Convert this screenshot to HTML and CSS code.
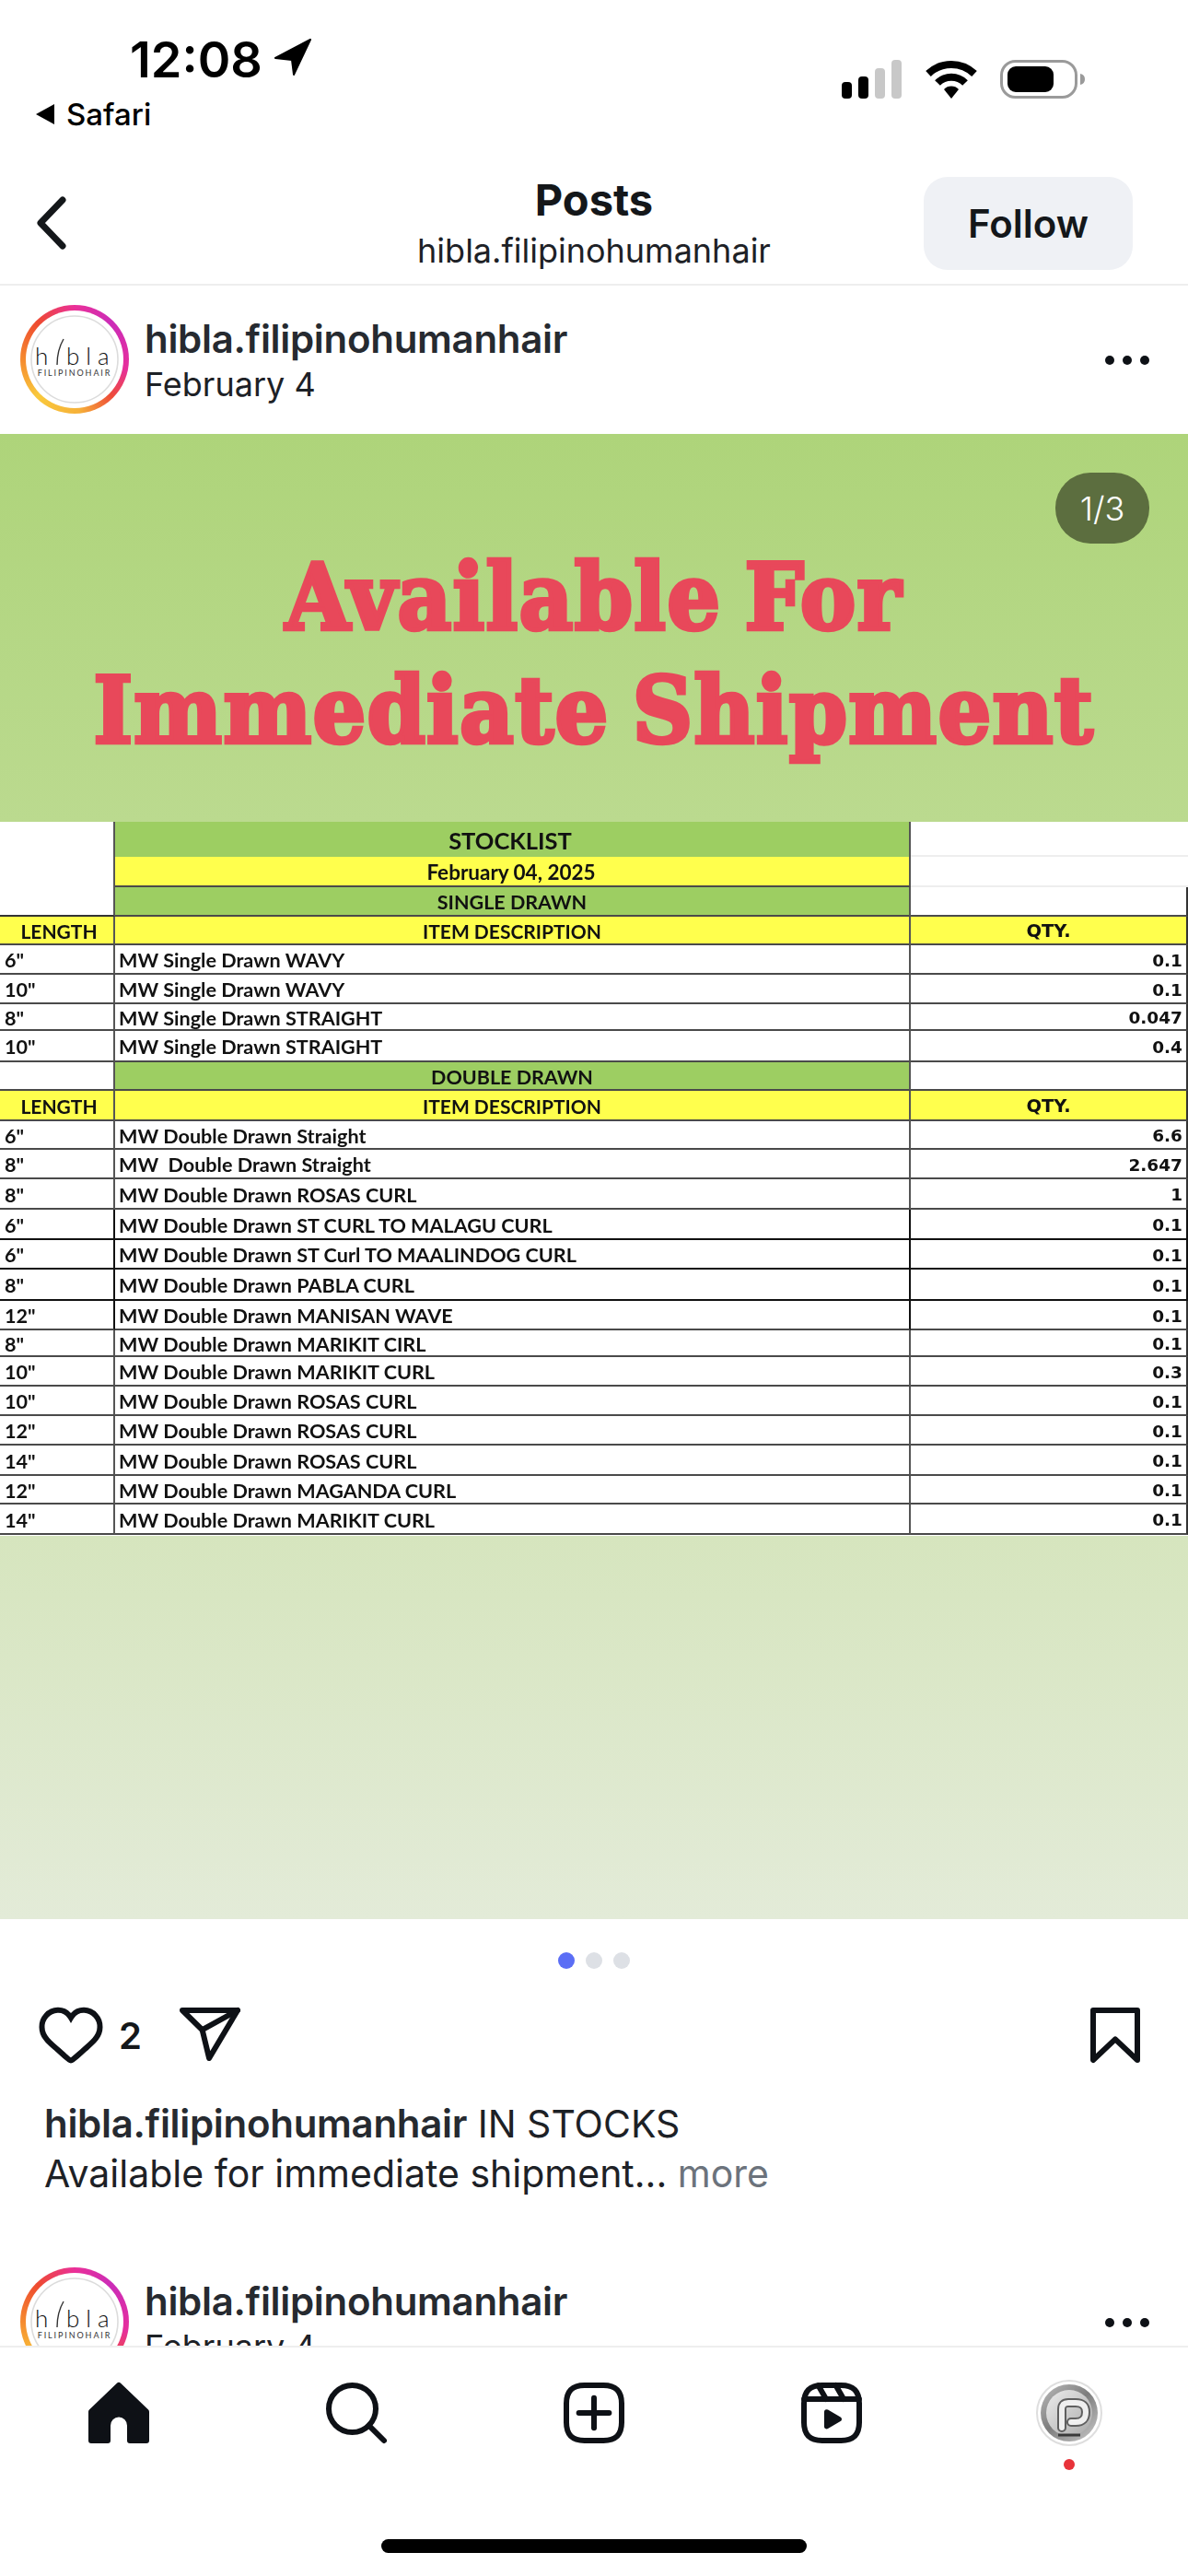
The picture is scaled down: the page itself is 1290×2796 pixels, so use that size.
FILE: index.html
```html
<!DOCTYPE html>
<html lang="en">
<head>
<meta charset="utf-8">
<title>Posts</title>
<link rel="stylesheet" href="styles.css">
</head>
<body>
<div class="app">
  <div class="status">
    <div class="status-left">
      <div class="clock-row">
        <span class="clock">12:08</span>
        <svg class="loc" viewBox="0 0 42 40"><path d="M40 1 L2 21 L20 23 L22 39 Z"/></svg>
      </div>
      <div class="safari-row">
        <svg class="safari-back" viewBox="0 0 22 22"><path d="M21 0 V22 L1 11 Z"/></svg>
        <span class="safari">Safari</span>
      </div>
    </div>
    <div class="status-right">
      <svg class="signal" viewBox="0 0 66 42">
        <rect x="0" y="24" width="11" height="18" rx="4"/>
        <rect x="18" y="18" width="11" height="24" rx="4"/>
        <rect class="off" x="36" y="9" width="11" height="33" rx="4"/>
        <rect class="off" x="54" y="0" width="11" height="42" rx="4"/>
      </svg>
      <svg class="wifi" viewBox="0 0 58 42">
        <path class="arc" d="M4 15 A36 36 0 0 1 54 15"/>
        <path class="arc" d="M14 25 A21 21 0 0 1 44 25"/>
        <path d="M21 32 L29 42 L37 32 A11 11 0 0 0 21 32 Z"/>
      </svg>
      <svg class="battery" viewBox="0 0 92 42">
        <rect class="shell" x="1.5" y="1.5" width="81" height="39" rx="15"/>
        <rect x="8" y="7" width="50" height="28" rx="9"/>
        <path class="cap" d="M87 15 Q92 16 92 21 Q92 26 87 27 Z"/>
      </svg>
    </div>
  </div>

  <header class="topbar">
    <div class="topbar-left">
      <svg class="chevron" viewBox="0 0 34 58"><path d="M29 4 L5 29 L29 54"/></svg>
    </div>
    <div class="topbar-title">
      <div class="title">Posts</div>
      <div class="subtitle">hibla.filipinohumanhair</div>
    </div>
    <div class="topbar-right"><span class="follow">Follow</span></div>
  </header>

  <main class="feed">
    <article class="post">
      <div class="post-head">
        <div class="ring"><div class="ring-gap">
          <svg class="logo" viewBox="0 0 96 96">
            <circle class="logo-edge" cx="48" cy="48" r="47"/>
            <text class="logo-word" x="5" y="54">h</text>
            <path class="logo-i" d="M36 26 Q29 38 29 54"/>
            <text class="logo-word" x="39" y="54">bla</text>
            <text class="logo-sub" x="48" y="66" text-anchor="middle">FILIPINOHAIR</text>
          </svg>
        </div></div>
        <div class="who">
          <div class="name">hibla.filipinohumanhair</div>
          <div class="date">February 4</div>
        </div>
        <div class="more-dots"><i></i><i></i><i></i></div>
      </div>

      <section class="slide">
        <span class="counter">1/3</span>
        <h1 class="headline">Available For<br>Immediate Shipment</h1>
        <div class="stock">
          <div class="cell blank span3"></div>
          <div class="cell green big">STOCKLIST</div>
          <div class="cell faint"></div>
          <div class="cell yellow mid">February 04, 2025</div>
          <div class="cell faint"></div>
          <div class="cell green sec">SINGLE DRAWN</div>
          <div class="cell qty"></div>

          <div class="cell yellow hdr lenhdr">LENGTH</div><div class="cell yellow hdr">ITEM DESCRIPTION</div><div class="cell yellow qtyhdr">QTY.</div>
          <div class="cell len">6"</div><div class="cell desc">MW Single Drawn WAVY</div><div class="cell qty">0.1</div>
          <div class="cell len">10"</div><div class="cell desc">MW Single Drawn WAVY</div><div class="cell qty">0.1</div>
          <div class="cell len">8"</div><div class="cell desc">MW Single Drawn STRAIGHT</div><div class="cell qty">0.047</div>
          <div class="cell len">10"</div><div class="cell desc">MW Single Drawn STRAIGHT</div><div class="cell qty">0.4</div>

          <div class="cell len"></div><div class="cell green sec">DOUBLE DRAWN</div><div class="cell qty"></div>
          <div class="cell yellow hdr lenhdr">LENGTH</div><div class="cell yellow hdr">ITEM DESCRIPTION</div><div class="cell yellow qtyhdr">QTY.</div>

          <div class="cell len">6"</div><div class="cell desc">MW Double Drawn Straight</div><div class="cell qty">6.6</div>
          <div class="cell len">8"</div><div class="cell desc">MW&nbsp; Double Drawn Straight</div><div class="cell qty">2.647</div>
          <div class="cell len">8"</div><div class="cell desc">MW Double Drawn ROSAS CURL</div><div class="cell qty">1</div>
          <div class="cell len ink">6"</div><div class="cell desc ink">MW Double Drawn ST CURL TO MALAGU CURL</div><div class="cell qty ink">0.1</div>
          <div class="cell len ink">6"</div><div class="cell desc ink">MW Double Drawn ST Curl TO MAALINDOG CURL</div><div class="cell qty ink">0.1</div>
          <div class="cell len ink">8"</div><div class="cell desc ink">MW Double Drawn PABLA CURL</div><div class="cell qty ink">0.1</div>
          <div class="cell len inkside">12"</div><div class="cell desc inkside">MW Double Drawn MANISAN WAVE</div><div class="cell qty">0.1</div>
          <div class="cell len">8"</div><div class="cell desc">MW Double Drawn MARIKIT CIRL</div><div class="cell qty">0.1</div>
          <div class="cell len">10"</div><div class="cell desc">MW Double Drawn MARIKIT CURL</div><div class="cell qty">0.3</div>
          <div class="cell len">10"</div><div class="cell desc">MW Double Drawn ROSAS CURL</div><div class="cell qty">0.1</div>
          <div class="cell len">12"</div><div class="cell desc">MW Double Drawn ROSAS CURL</div><div class="cell qty">0.1</div>
          <div class="cell len">14"</div><div class="cell desc">MW Double Drawn ROSAS CURL</div><div class="cell qty">0.1</div>
          <div class="cell len">12"</div><div class="cell desc">MW Double Drawn MAGANDA CURL</div><div class="cell qty">0.1</div>
          <div class="cell len">14"</div><div class="cell desc">MW Double Drawn MARIKIT CURL</div><div class="cell qty">0.1</div>
        </div>
      </section>

      <div class="pager"><i class="on"></i><i></i><i></i></div>

      <div class="actions">
        <svg class="icon" viewBox="0 0 24 24"><path class="solid" d="M16.792 3.904A4.989 4.989 0 0 1 21.5 9.122c0 3.072-2.652 4.959-5.197 7.222-2.512 2.243-3.865 3.469-4.303 3.752-.477-.309-2.143-1.823-4.303-3.752C5.141 14.072 2.5 12.167 2.5 9.122a4.989 4.989 0 0 1 4.708-5.218 4.21 4.21 0 0 1 3.675 1.941c.84 1.175.98 1.763 1.12 1.763s.278-.588 1.11-1.766a4.17 4.17 0 0 1 3.679-1.938m0-2a6.04 6.04 0 0 0-4.797 2.127 6.052 6.052 0 0 0-4.787-2.127A6.985 6.985 0 0 0 .5 9.122c0 3.61 2.55 5.827 5.015 7.97.283.246.569.494.853.747l1.027.918a44.998 44.998 0 0 0 3.518 3.018 2 2 0 0 0 2.174 0 45.263 45.263 0 0 0 3.626-3.115l.922-.824c.293-.26.59-.519.885-.774 2.334-2.025 4.98-4.32 4.98-7.94a6.985 6.985 0 0 0-6.708-7.218Z"/></svg>
        <span class="likes">2</span>
        <svg class="icon send" viewBox="0 0 24 24"><line class="line" x1="22" y1="3" x2="9.218" y2="10.083"/><polygon class="line" points="11.698 20.334 22 3.001 2 3.001 9.218 10.084 11.698 20.334"/></svg>
        <svg class="icon save" viewBox="0 0 24 24"><polygon class="line" points="20 21 12 13.44 4 21 4 3 20 3 20 21"/></svg>
      </div>

      <p class="caption"><b>hibla.filipinohumanhair</b> IN STOCKS<br>Available for immediate shipment... <span class="muted">more</span></p>
    </article>

    <article class="post">
      <div class="post-head">
        <div class="ring"><div class="ring-gap">
          <svg class="logo" viewBox="0 0 96 96">
            <circle class="logo-edge" cx="48" cy="48" r="47"/>
            <text class="logo-word" x="5" y="54">h</text>
            <path class="logo-i" d="M36 26 Q29 38 29 54"/>
            <text class="logo-word" x="39" y="54">bla</text>
            <text class="logo-sub" x="48" y="66" text-anchor="middle">FILIPINOHAIR</text>
          </svg>
        </div></div>
        <div class="who">
          <div class="name">hibla.filipinohumanhair</div>
          <div class="date">February 4</div>
        </div>
        <div class="more-dots"><i></i><i></i><i></i></div>
      </div>
    </article>
  </main>

  <nav class="tabs">
    <div class="tab"><svg class="icon" viewBox="0 0 24 24"><path class="solid" d="M22 23h-6.001a1 1 0 0 1-1-1v-5.455a2.997 2.997 0 1 0-5.993 0V22a1 1 0 0 1-1 1H2a1 1 0 0 1-1-1V11.543a1.002 1.002 0 0 1 .31-.724l10-9.543a1.001 1.001 0 0 1 1.38 0l10 9.543a1.002 1.002 0 0 1 .31.724V22a1 1 0 0 1-1 1Z"/></svg></div>
    <div class="tab"><svg class="icon" viewBox="0 0 24 24"><path class="line" d="M19 10.5A8.5 8.5 0 1 1 10.5 2a8.5 8.5 0 0 1 8.5 8.5Z"/><line class="line" x1="16.511" y1="16.511" x2="22" y2="22"/></svg></div>
    <div class="tab"><svg class="icon" viewBox="0 0 24 24"><path class="line" d="M2 12v3.45c0 2.849.698 4.005 1.606 4.944.94.909 2.098 1.608 4.946 1.608h6.896c2.848 0 4.006-.7 4.946-1.608C21.302 19.455 22 18.3 22 15.45V8.552c0-2.849-.698-4.006-1.606-4.945C19.454 2.7 18.296 2 15.448 2H8.552c-2.848 0-4.006.699-4.946 1.607C2.698 4.547 2 5.703 2 8.552Z"/><line class="line" x1="6.545" y1="12" x2="17.455" y2="12"/><line class="line" x1="12" y1="6.545" x2="12" y2="17.455"/></svg></div>
    <div class="tab"><svg class="icon" viewBox="0 0 24 24"><line class="line" x1="2.049" y1="7.002" x2="21.951" y2="7.002"/><line class="line" x1="13.504" y1="2.001" x2="16.362" y2="7.002"/><line class="line" x1="7.207" y1="2.11" x2="10.002" y2="7.002"/><path class="line" d="M2 12.001v3.449c0 2.849.698 4.006 1.606 4.945.94.908 2.098 1.607 4.946 1.607h6.896c2.848 0 4.006-.699 4.946-1.607.908-.939 1.606-2.096 1.606-4.945V8.552c0-2.848-.698-4.006-1.606-4.945C19.454 2.699 18.296 2 15.448 2H8.552c-2.848 0-4.006.699-4.946 1.607C2.698 4.546 2 5.704 2 8.552Z"/><path class="solid" d="M9.763 17.664a.908.908 0 0 1-.454-.787V11.63a.909.909 0 0 1 1.364-.788l4.545 2.624a.909.909 0 0 1 0 1.575l-4.545 2.624a.91.91 0 0 1-.91 0Z"/></svg></div>
    <div class="tab tab-me">
      <svg class="me" viewBox="0 0 72 72">
        <defs>
          <linearGradient id="disc" x1="0" y1="0" x2="0.9" y2="1"><stop offset="0" stop-color="#bdbdbd"/><stop offset=".5" stop-color="#7d7d7d"/><stop offset="1" stop-color="#c4c4c4"/></linearGradient>
          <linearGradient id="face" x1="0" y1="0" x2="1" y2="1"><stop offset="0" stop-color="#ececec"/><stop offset="1" stop-color="#a9a9a9"/></linearGradient>
        </defs>
        <circle class="me-edge" cx="36" cy="36" r="35"/>
        <circle cx="36" cy="36" r="31" fill="url(#disc)"/>
        <circle cx="36" cy="36" r="25" fill="url(#face)"/>
        <path class="me-p-shade" d="M28 52 V32 Q28 25 35 25 H43 Q54 25 54 35 Q54 46 43 46 H38"/>
        <path class="me-p" d="M28 52 V32 Q28 25 35 25 H43 Q54 25 54 35 Q54 46 43 46 H38"/>
        <path class="me-foot" d="M24 60 H48"/>
      </svg>
      <span class="badge"></span>
    </div>
  </nav>
  <div class="home-zone"><span class="home-bar"></span></div>
</div>
</body>
</html>
```
FILE: styles.css
```css
* { box-sizing: border-box; }
html, body { margin: 0; padding: 0; background: #fff; }
body { font-family: Inter, "Noto Sans", sans-serif; color: #22262b; }
.app { width: 1290px; height: 2796px; display: flex; flex-direction: column; overflow: hidden; background: #fff; }

/* status bar */
.status { height: 170px; flex: none; display: flex; justify-content: space-between; color: #000; }
.status-left { padding: 37px 0 0 38px; }
.clock-row { display: flex; align-items: center; gap: 12px; padding-left: 103px; height: 56px; }
.clock { font-size: 54px; font-weight: 600; line-height: 56px; }
.loc { width: 42px; height: 40px; fill: #000; stroke: #000; stroke-width: 2; stroke-linejoin: round; margin-top: -6px; }
.safari-row { display: flex; align-items: center; gap: 12px; margin-top: 11px; }
.safari-back { width: 22px; height: 22px; fill: #000; }
.safari { font-size: 33px; line-height: 40px; font-weight: 500; }
.status-right { display: flex; align-items: flex-start; gap: 24px; padding: 65px 112px 0 0; }
.signal { width: 66px; height: 42px; fill: #000; }
.signal .off { fill: #c8c8c8; }
.wifi { width: 58px; height: 42px; fill: #000; }
.wifi .arc { fill: none; stroke: #000; stroke-width: 8; }
.battery { width: 92px; height: 42px; fill: #000; }
.battery .shell { fill: none; stroke: #9a9a9a; stroke-width: 3; }
.battery .cap { fill: #9a9a9a; }

/* top bar */
.topbar { flex: none; height: 140px; display: grid; grid-template-columns: 1fr auto 1fr; border-bottom: 2px solid #eeeeee; }
.topbar-left { padding: 43px 0 0 37px; }
.chevron { width: 38px; height: 58px; fill: none; stroke: #14171a; stroke-width: 7; stroke-linecap: round; stroke-linejoin: round; display: block; }
.topbar-title { text-align: center; padding-top: 17px; }
.title { font-size: 47px; font-weight: 700; line-height: 60px; color: #14171a; }
.subtitle { font-size: 36px; line-height: 50px; color: #1d2126; }
.topbar-right { display: flex; justify-content: flex-end; padding: 22px 60px 0 0; }
.follow { width: 227px; height: 101px; border-radius: 26px; background: #eff1f5; font-size: 42px; font-weight: 600; color: #14171a; display: flex; align-items: center; justify-content: center; }

/* feed */
.feed { flex: 1; min-height: 0; overflow: hidden; }
.post-head { height: 161px; display: flex; align-items: center; padding: 0 42px 0 22px; gap: 17px; }
.ring { width: 118px; height: 118px; flex: none; border-radius: 50%; padding: 6px; margin-top: -1px;
  background: conic-gradient(#ea3098 0deg, #cb2cb8 45deg, #e62f9c 100deg, #ee4c38 135deg, #f6b139 175deg, #f9c93c 225deg, #f58a2f 270deg, #ee4a30 315deg, #ea3098 360deg); }
.ring-gap { width: 106px; height: 106px; border-radius: 50%; background: #fff; padding: 5px; }
.logo { width: 96px; height: 96px; display: block; }
.logo-edge { fill: #fff; stroke: #dcdcdc; stroke-width: 1.6; }
.logo-word { font-family: Lato, sans-serif; font-weight: 300; font-size: 26px; letter-spacing: 7px; fill: #111; }
.logo-i { fill: none; stroke: #333; stroke-width: 1.4; }
.logo-sub { font-family: Lato, sans-serif; font-size: 9px; letter-spacing: 1.9px; fill: #333; }
.who { flex: 1; min-width: 0; padding-top: 2px; }
.name { font-size: 42px; font-weight: 600; line-height: 50px; color: #262a30; letter-spacing: -.3px; }
.date { font-size: 36px; line-height: 48px; color: #1d2126; }
.more-dots { display: flex; gap: 9px; }
.more-dots i { width: 10px; height: 10px; border-radius: 50%; background: #0e1116; display: block; }

/* slide */
.slide { position: relative; height: 1612px; padding-top: 116px;
  background: linear-gradient(#aed47a 0, #bbda8f 421px, #d6e5be 1196px, #e3ebd8 1612px); }
.counter { position: absolute; top: 42px; right: 42px; width: 102px; height: 77px; border-radius: 38px; background: #5c6e3f; color: #fff; font-size: 36px; font-weight: 300; display: flex; align-items: center; justify-content: center; }
.headline { margin: 0; height: 305px; text-align: center; font-family: "DejaVu Serif", serif; font-stretch: condensed; font-weight: 700; font-size: 100px; line-height: 123px; color: #e8485a; letter-spacing: 1.8px; word-spacing: -8px; -webkit-text-stroke: 4.5px #e8485a; }

.stock { display: grid; grid-template-columns: 125px 864px 1fr;
  grid-template-rows: 38px 33px 32px 31px 32px 32px 29px 34px 31px 33px 31px 32px 33px 33px 32px 34px 32px 29px 32px 32px 32px 33px 31px 33px;
  height: 775px; background: #fff; filter: blur(.45px); font-family: Lato, Carlito, sans-serif; font-weight: 700; color: #111; font-size: 21.6px; }
.cell { display: flex; align-items: center; min-width: 0; white-space: nowrap; padding-top: 2px; border-bottom: 2px solid #4a4a4a; border-right: 2px solid #555; }
.blank { border-bottom-color: #333; }
.span3 { grid-row: span 3; }
.green { background: #9dce62; justify-content: center; }
.yellow { background: #ffff4d; justify-content: center; }
.big { font-size: 25.5px; border-bottom: 0; padding-right: 4px; }
.mid { font-size: 22.5px; padding-right: 2px; }
.sec { font-size: 21.5px; }
.hdr { font-size: 21px; }
.lenhdr { padding-left: 5px; }
.faint { border-bottom: 2px solid #eee; border-right: 0; }
.len { padding-left: 5px; }
.desc { padding-left: 4px; }
.qty { justify-content: flex-end; padding-right: 4px; font-family: "DejaVu Sans", sans-serif; font-size: 18.5px; border-right-color: #333; }
.qtyhdr { font-family: "DejaVu Sans", sans-serif; font-size: 19.5px; border-right-color: #333; }
.ink { border-bottom-color: #111; border-right-color: #111; }
.inkside { border-right-color: #111; }

/* pager */
.pager { display: flex; justify-content: center; gap: 12px; padding: 36px 0 0; height: 90px; }
.pager i { width: 18px; height: 18px; border-radius: 50%; background: #dde0e5; display: block; }
.pager .on { background: #5b6ef5; }

/* actions */
.actions { display: flex; align-items: center; height: 72px; padding: 0 43px 0 41px; }
.icon { width: 72px; height: 72px; display: block; flex: none; }
.solid { fill: #0e1116; }
.line { fill: none; stroke: #0e1116; stroke-width: 2; stroke-linecap: round; stroke-linejoin: round; }
.likes { font-size: 40px; font-weight: 600; margin-left: 16px; color: #14171a; }
.send { margin-left: 38px; }
.save { margin-left: auto; }

.caption { margin: 33px 0 0; padding-left: 48px; font-size: 41px; line-height: 54px; color: #1d2126; height: 162px; }
.caption b { font-weight: 600; font-size: 42px; color: #262a30; letter-spacing: -.3px; }
.muted { color: #6c737c; }

/* tabs */
.tabs { flex: none; height: 190px; display: grid; grid-template-columns: repeat(5, 1fr); border-top: 2px solid #eeeeee; background: #fff; padding-top: 35px; }
.tab { display: flex; flex-direction: column; align-items: center; }
.me { width: 72px; height: 72px; display: block; }
.me-edge { fill: #fff; stroke: #dedede; stroke-width: 2; }
.me-p-shade { fill: none; stroke: #5f5f5f; stroke-width: 10; stroke-linejoin: round; stroke-linecap: round; }
.me-p { fill: none; stroke: #efefef; stroke-width: 6; stroke-linejoin: round; stroke-linecap: round; }
.me-foot { fill: none; stroke: #3a3a3a; stroke-width: 3; }
.badge { width: 12px; height: 12px; border-radius: 50%; background: #e8333a; margin-top: 14px; }
.home-zone { flex: none; height: 60px; display: flex; justify-content: center; }
.home-bar { width: 462px; height: 15px; border-radius: 8px; background: #000; margin-top: 20px; }
```
